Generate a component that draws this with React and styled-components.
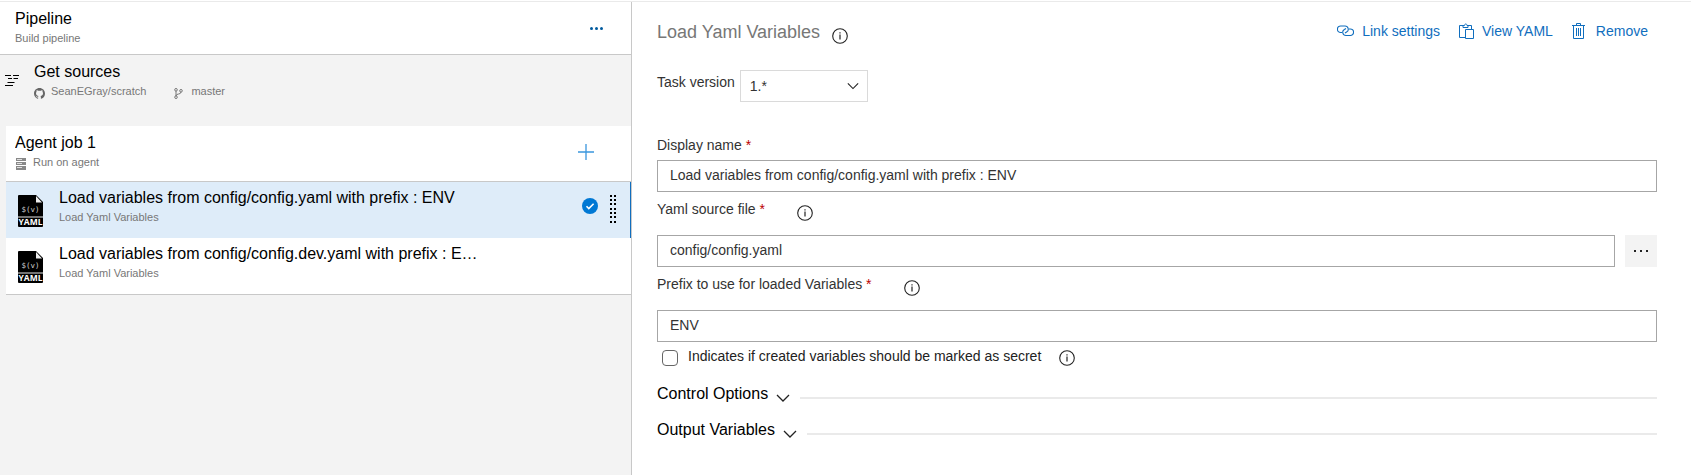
import React from "react";
import styled, { createGlobalStyle } from "styled-components";

const GlobalStyle = createGlobalStyle`
  *, *::before, *::after { box-sizing: border-box; }
  body { margin: 0; background: #fff; color: #000; font-family: "Liberation Sans", Arial, sans-serif; }
  button, input, select { font: inherit; color: inherit; margin: 0; }
  svg { display: block; flex: none; }
`;

const Page = styled.div`
  min-height: 100vh;
  display: flex;
  flex-direction: column;
  padding-top: 1px;
`;
const Workspace = styled.div`
  flex: 1;
  display: flex;
  border-top: 1px solid #eaeaea;
`;
const Sidebar = styled.aside`
  flex: 0 0 632px;
  background: #f3f3f3;
  border-right: 1px solid #c8c8c8;
`;
const PipelineHeader = styled.header`
  display: flex;
  align-items: center;
  justify-content: space-between;
  height: 53px;
  padding: 0 23px 0 15px;
  background: #fff;
  border-bottom: 1px solid #c8c8c8;
`;
const Stack = styled.div`
  flex: 1;
  min-width: 0;
`;
const Title = styled.div`
  font-size: 16px;
  line-height: 20px;
  white-space: nowrap;
  overflow: hidden;
  text-overflow: ellipsis;
`;
const Sub = styled.div`
  display: flex;
  align-items: center;
  gap: 6px;
  font-size: 11px;
  line-height: 18px;
  color: #777;
  svg { margin-top: 4px; }
`;
const IconButton = styled.button`
  display: grid;
  place-items: center;
  flex: none;
  width: 24px;
  height: 24px;
  padding: 0;
  border: 0;
  background: none;
  color: #106ebe;
`;
const Sources = styled.section`
  display: flex;
  gap: 14px;
  height: 71px;
  padding: 7px 5px 0;
`;
const FlowIcon = styled.span`
  padding-top: 12px;
`;
const Branch = styled.span`
  display: flex;
  align-items: center;
  gap: 8px;
  margin-left: 22px;
`;
const Job = styled.section`
  margin-left: 6px;
  background: #fff;
  border-bottom: 1px solid #c8c8c8;
`;
const JobHeader = styled.div`
  display: flex;
  align-items: center;
  height: 56px;
  padding: 0 33px 4px 9px;
  border-bottom: 1px solid #c8c8c8;
`;
const TaskList = styled.ul`
  list-style: none;
  margin: 0;
  padding: 0;
`;
const Task = styled.li`
  display: flex;
  gap: 16px;
  height: 56px;
  padding: 13px 13px 0 12px;
  background: ${(p) => (p.$selected ? "#deecf9" : "#fff")};
  border-right: 1px solid ${(p) => (p.$selected ? "#106ebe" : "#fff")};
`;
const TaskText = styled.div`
  width: 422px;
  min-width: 0;
  margin-top: -7px;
`;
const TaskMarks = styled.div`
  flex: 1;
  display: flex;
  align-items: flex-start;
  justify-content: flex-end;
  gap: 12px;
`;
const CheckMark = styled.span`
  padding-top: 3px;
`;

const Details = styled.main`
  flex: 1;
  min-width: 0;
  padding: 18px 34px 0 25px;
`;
const DetailsHeader = styled.header`
  display: flex;
  justify-content: space-between;
  height: 50px;
`;
const Heading = styled.h1`
  display: flex;
  gap: 12px;
  margin: 0;
  font-size: 18px;
  font-weight: 400;
  line-height: 24px;
  color: #777;
`;
const InfoWrap = styled.span`
  padding-top: ${(p) => p.$top}px;
  color: #222;
`;
const Actions = styled.nav`
  display: flex;
  gap: 19px;
  padding-right: 9px;
`;
const Action = styled.button`
  display: flex;
  align-items: center;
  gap: ${(p) => p.$gap}px;
  height: 24px;
  padding: 0 0 2px;
  border: 0;
  background: none;
  font-size: 14px;
  color: #106ebe;
`;
const Version = styled.div`
  display: flex;
  gap: 5px;
  height: 66px;
  font-size: 14px;
  line-height: 24px;
  color: #333;
`;
const SelectBox = styled.div`
  position: relative;
  height: 32px;
  svg { position: absolute; right: 9px; top: 12px; pointer-events: none; }
`;
const Select = styled.select`
  appearance: none;
  width: 128px;
  height: 32px;
  padding: 0 9px;
  border: 1px solid #dadada;
  border-radius: 0;
  background: #fff;
`;
const LabelRow = styled.div`
  display: flex;
  gap: 32px;
  height: ${(p) => (p.$tall ? 35 : 24)}px;
  font-size: 14px;
  line-height: 18px;
  color: #333;
`;
const Required = styled.span`
  color: #b00;
`;
const FieldRow = styled.div`
  display: flex;
  gap: 10px;
`;
const TextInput = styled.input`
  flex: 1;
  min-width: 0;
  height: 32px;
  padding: 0 12px 3px;
  border: 1px solid #a6a6a6;
  border-radius: 0;
  font-size: 14px;
  color: #333;
`;
const BrowseButton = styled.button`
  display: grid;
  place-items: center;
  width: 32px;
  height: 32px;
  padding: 0;
  border: 0;
  background: #f3f3f3;
`;
const Field = styled.div`
  margin-bottom: ${(p) => (p.$last ? 4 : 8)}px;
`;
const CheckRow = styled.div`
  display: flex;
  gap: 10px;
  height: 34px;
  padding-left: 5px;
  font-size: 14px;
  line-height: 20px;
  color: #222;
`;
const Checkbox = styled.input`
  appearance: none;
  width: 16px;
  height: 16px;
  margin-top: 4px;
  border: 1px solid #666;
  border-radius: 4px;
  background: #fff;
`;
const CheckLabel = styled.label`
  padding-right: 8px;
`;
const SectionButton = styled.button`
  display: flex;
  align-items: center;
  gap: 8px;
  width: 100%;
  height: 36px;
  padding: 0;
  border: 0;
  background: none;
  font-size: 16px;
  line-height: 20px;
  text-align: left;
`;
const SectionName = styled.span`
  padding-bottom: 8px;
`;
const Rule = styled.span`
  flex: 1;
  height: 2px;
  margin-left: 2px;
  background: #eaeaea;
`;

const Info = ({ top = 5 }) => (
  <InfoWrap $top={top}>
    <svg width="16" height="16" viewBox="0 0 16 16" fill="none" stroke="currentColor">
      <circle cx="8" cy="8" r="7.3" strokeWidth="1.1" />
      <path d="M8 6.5V11.5M8 4.2v1.3" strokeWidth="1.2" />
    </svg>
  </InfoWrap>
);
const Chevron = ({ size = 14 }) => (
  <svg width={size} height="8" viewBox="0 0 14 8" fill="none" stroke="#222" strokeWidth="1.3">
    <path d="M1 1l6 6 6-6" />
  </svg>
);
const YamlIcon = () => (
  <svg width="25" height="32" viewBox="0 0 25 32">
    <path d="M1 0h17l7 7v24q0 1-1 1H1q-1 0-1-1V1q0-1 1-1z" fill="#000" />
    <path d="M18 1v6.5h6z" fill="#eee" />
    <path d="M0 22h25" stroke="#999" strokeWidth="1.5" />
    <text x="12.5" y="17" textAnchor="middle" fontFamily="DejaVu Sans Mono, monospace" fontSize="7.5" fill="#ccc">$(v)</text>
    <text x="12.5" y="30" textAnchor="middle" fontFamily="Open Sans, sans-serif" fontSize="8.5" fontWeight="700" fill="#fff">YAML</text>
  </svg>
);
const Grip = () => (
  <svg width="7" height="28" viewBox="0 0 7 28">
    {[0, 4, 8, 13, 17, 21, 26].map((y) => (
      <path key={y} d={`M0 ${y}h2v2h-2zM4 ${y}h2v2h-2z`} />
    ))}
  </svg>
);

const TaskItem = ({ title, selected }) => (
  <Task $selected={selected}>
    <YamlIcon />
    <TaskText>
      <Title>{title}</Title>
      <Sub>Load Yaml Variables</Sub>
    </TaskText>
    {selected && (
      <TaskMarks>
        <CheckMark>
          <svg width="16" height="16" viewBox="0 0 16 16" fill="none">
            <circle cx="8" cy="8" r="8" fill="#0078d4" />
            <path d="M4.5 8.2l2.3 2.3 4.8-4.8" stroke="#fff" strokeWidth="1.6" />
          </svg>
        </CheckMark>
        <Grip />
      </TaskMarks>
    )}
  </Task>
);

const TextField = ({ id, label, value, info, browse, last }) => (
  <Field $last={last}>
    <LabelRow $tall={info}>
      <label htmlFor={id}>{label} <Required>*</Required></label>
      {info && <Info />}
    </LabelRow>
    <FieldRow>
      <TextInput id={id} defaultValue={value} />
      {browse && (
        <BrowseButton aria-label="Browse">
          <svg width="16" height="2" viewBox="0 0 16 2"><path d="M1 0h2v2h-2zM7 0h2v2h-2zM13 0h2v2h-2z" fill="#222" /></svg>
        </BrowseButton>
      )}
    </FieldRow>
  </Field>
);

const Section = ({ name }) => (
  <SectionButton>
    <SectionName>{name}</SectionName>
    <Chevron />
    <Rule />
  </SectionButton>
);

export default function App() {
  return (
    <Page>
      <GlobalStyle />
      <Workspace>
        <Sidebar>
          <PipelineHeader>
            <Stack>
              <Title>Pipeline</Title>
              <Sub>Build pipeline</Sub>
            </Stack>
            <IconButton aria-label="More actions">
              <svg width="13" height="3" viewBox="0 0 13 3" fill="#005a9e">
                <circle cx="1.5" cy="1.5" r="1.5" /><circle cx="6.5" cy="1.5" r="1.5" /><circle cx="11.5" cy="1.5" r="1.5" />
              </svg>
            </IconButton>
          </PipelineHeader>
          <Sources>
            <FlowIcon>
              <svg width="15" height="13" viewBox="0 0 15 13" stroke="#000">
                <path d="M0 1.5h6M8 1.5h6M3 4.5h4M8.5 4.5h4.5M2.5 8.5h7M0 11.5h8" />
              </svg>
            </FlowIcon>
            <Stack>
              <Title>Get sources</Title>
              <Sub>
                <svg width="11" height="11" viewBox="0 0 16 16" fill="#666">
                  <path d="M8 0C3.58 0 0 3.58 0 8c0 3.54 2.29 6.53 5.47 7.59.4.07.55-.17.55-.38v-1.49c-2.01.37-2.53-.49-2.69-.94-.09-.23-.48-.94-.82-1.13-.28-.15-.68-.52-.01-.53.63-.01 1.08.58 1.23.82.72 1.21 1.87.87 2.33.66.07-.52.28-.87.51-1.07-1.78-.2-3.64-.89-3.64-3.95 0-.87.31-1.59.82-2.15-.08-.2-.36-1.02.08-2.12 0 0 .67-.21 2.2.82a7.4 7.4 0 0 1 4 0c1.53-1.04 2.2-.82 2.2-.82.44 1.1.16 1.92.08 2.12.51.56.82 1.27.82 2.15 0 3.07-1.87 3.75-3.65 3.95.29.25.54.73.54 1.48v2.2c0 .21.15.46.55.38A8 8 0 0 0 16 8c0-4.42-3.58-8-8-8z" />
                </svg>
                <span>SeanEGray/scratch</span>
                <Branch>
                  <svg width="9" height="11" viewBox="0 0 9 11" fill="none" stroke="#777">
                    <circle cx="2" cy="1.8" r="1.3" /><circle cx="7" cy="2.8" r="1.3" /><circle cx="2" cy="9.2" r="1.3" />
                    <path d="M2 3v5M7 4c0 3-5 1-5 4" />
                  </svg>
                  <span>master</span>
                </Branch>
              </Sub>
            </Stack>
          </Sources>
          <Job>
            <JobHeader>
              <Stack>
                <Title>Agent job 1</Title>
                <Sub>
                  <svg width="12" height="12" viewBox="0 0 12 12" fill="#888">
                    <path d="M1 0h10v3h-10zM1 4h10v3h-10zM1 8h10v4h-10z" />
                    <path d="M2 1.5h5M2 5.5h5M2 9.5h5" stroke="#ddd" />
                  </svg>
                  <span>Run on agent</span>
                </Sub>
              </Stack>
              <IconButton aria-label="Add a task">
                <svg width="16" height="16" viewBox="0 0 16 16" stroke="#3a96dd" strokeWidth="1.3"><path d="M0 8h16M8 0v16" /></svg>
              </IconButton>
            </JobHeader>
            <TaskList>
              <TaskItem selected title="Load variables from config/config.yaml with prefix : ENV" />
              <TaskItem title="Load variables from config/config.dev.yaml with prefix : ENV" />
            </TaskList>
          </Job>
        </Sidebar>
        <Details>
          <DetailsHeader>
            <Heading>Load Yaml Variables <Info top={8} /></Heading>
            <Actions>
              <Action $gap={8}>
                <svg width="17" height="12" viewBox="0 0 17 12" fill="none" stroke="currentColor" strokeWidth="1.1">
                  <path d="M5 7.5H3.7A3.2 3.2 0 0 1 3.7 1H8a3.2 3.2 0 0 1 1.6 6L8 8" />
                  <path d="M12 4h1.3a3.2 3.2 0 0 1 0 6.5H9a3.2 3.2 0 0 1-1.6-6L9 3.500" />
                </svg>
                Link settings
              </Action>
              <Action $gap={8}>
                <svg width="15" height="16" viewBox="0 0 15 16" fill="none" stroke="currentColor">
                  <path d="M6 14.5H.5v-12H4M9 2.5h3.500V6M4 4.5v-2h1.5c0-2 2.5-2 2.5 0h1v2zM6.5 6.5h8v9h-8z" />
                </svg>
                View YAML
              </Action>
              <Action $gap={11}>
                <svg width="13" height="16" viewBox="0 0 13 16" fill="none" stroke="currentColor">
                  <path d="M0 2.5h13M4.5 2.5v-2h4v2M1.5 2.5v13h10v-13M4.5 5v8M6.5 5v8M8.5 5v8" />
                </svg>
                Remove
              </Action>
            </Actions>
          </DetailsHeader>
          <Version>
            <label htmlFor="version">Task version</label>
            <SelectBox>
              <Select id="version" defaultValue="1.*"><option>1.*</option></Select>
              <Chevron size={12} />
            </SelectBox>
          </Version>
          <TextField id="name" label="Display name" value="Load variables from config/config.yaml with prefix : ENV" />
          <TextField id="source" label="Yaml source file" value="config/config.yaml" info browse />
          <TextField id="prefix" label="Prefix to use for loaded Variables" value="ENV" info last />
          <CheckRow>
            <Checkbox type="checkbox" id="secret" />
            <CheckLabel htmlFor="secret">Indicates if created variables should be marked as secret</CheckLabel>
            <Info top={4} />
          </CheckRow>
          <Section name="Control Options" />
          <Section name="Output Variables" />
        </Details>
      </Workspace>
    </Page>
  );
}
